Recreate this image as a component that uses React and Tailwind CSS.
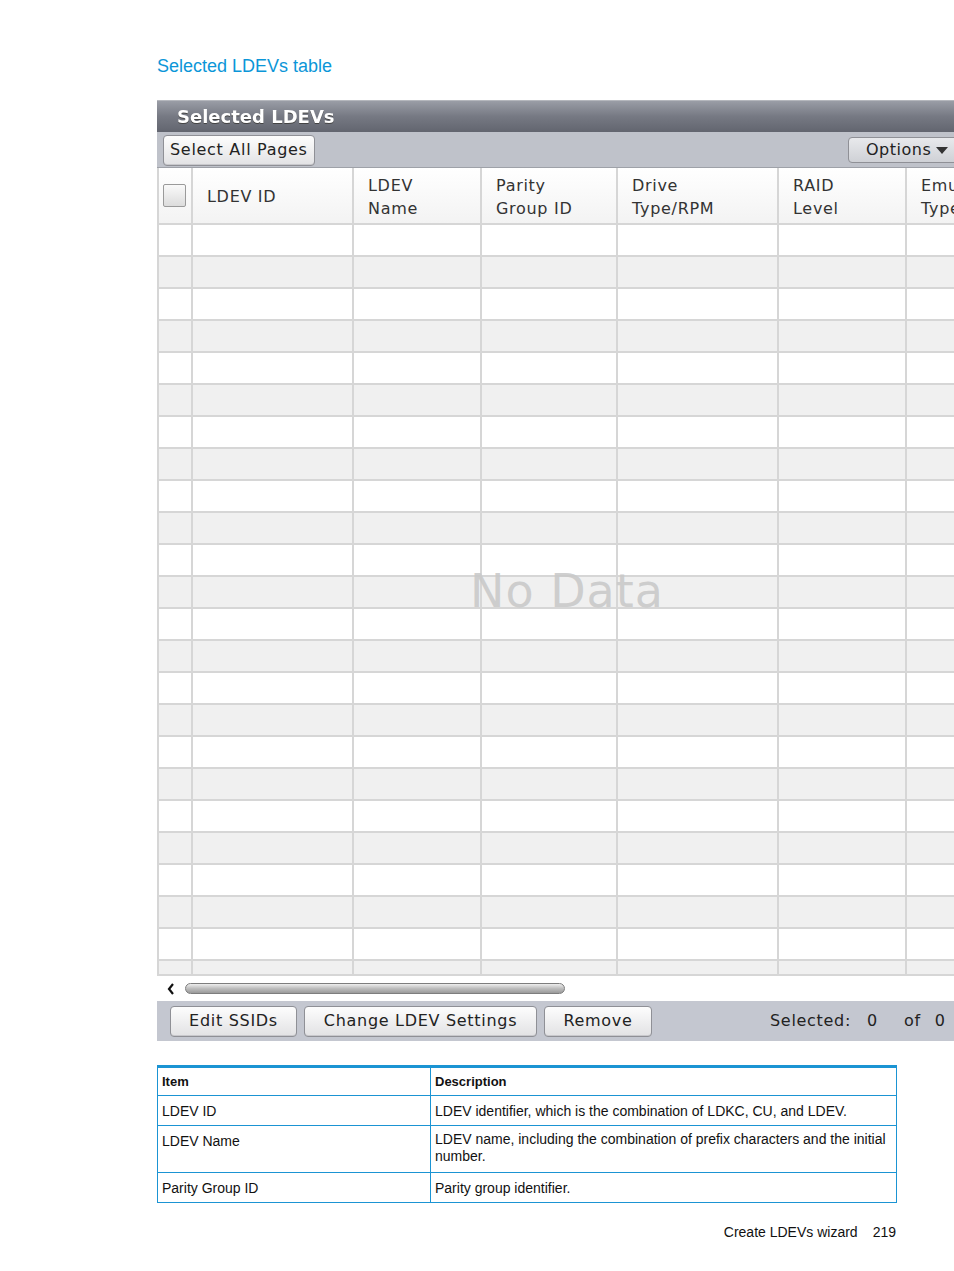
const cols = "grid grid-cols-[34px_161px_128px_136px_161px_128px_160px]";

const headers = ["LDEV ID", "LDEV|Name", "Parity|Group ID", "Drive|Type/RPM", "RAID|Level", "Emulation|Type"];

function Btn({ children, className = "" }) {
  return (
    <button
      className={
        "h-[31px] rounded-[4px] border border-[#8f9096] bg-gradient-to-b from-[#fdfdfd] to-[#e2e2e4] text-[16px] tracking-[0.7px] text-[#222] shadow-[inset_0_-1px_0_#c8c8cc] " +
        className
      }
    >
      {children}
    </button>
  );
}

function GridRow({ i, h = "h-[32px]" }) {
  const bg = i % 2 === 0 ? "bg-white" : "bg-[#f0f0f0]";
  return (
    <div className={`${cols} ${h} ${bg} border-b-2 border-[#d6d6d6]`}>
      {Array.from({ length: 7 }).map((_, c) => (
        <div key={c} className="border-r-2 border-[#d6d6d6]" />
      ))}
    </div>
  );
}

export default function App() {
  const rows = Array.from({ length: 23 });
  return (
    <div className="w-[954px] h-[1271px] bg-white overflow-hidden font-['Liberation_Sans',sans-serif]">
      <div className="pl-[157px] pt-[54px]">
        <h2 className="text-[18px] leading-[25px] text-[#0b96d8] font-light">Selected LDEVs table</h2>
      </div>

      <div className="ml-[157px] mt-[21px] w-[797px] overflow-hidden font-['DejaVu_Sans',sans-serif]">
        <div className="w-[1100px]">
          {/* title bar */}
          <div className="h-[32px] bg-gradient-to-b from-[#9a9da6] via-[#767983] to-[#62656f] flex items-center pl-[20px] border-t border-[#b5b7bd]">
            <span className="text-white font-bold text-[18px] drop-shadow-[0_1px_0_#444]">Selected LDEVs</span>
          </div>
          {/* toolbar */}
          <div className="h-[36px] bg-[#bfc2ca] flex items-center border-b border-[#9ea1a8]">
            <div className="w-[797px] flex items-center justify-between pl-[6px] pt-[1px]">
              <Btn className="h-[26px] px-[6px] text-[16px] tracking-[0.3px] leading-none">Select All Pages</Btn>
              <button className="h-[26px] w-[120px] -mr-[14px] rounded-[4px] border border-[#8f9096] bg-gradient-to-b from-[#e8e9ec] to-[#cfd1d6] text-[16px] tracking-[0.5px] text-[#222] flex items-center pl-[17px] gap-[4px]">
                Options
                <svg width="14" height="10" viewBox="0 0 14 10"><path d="M1 2 L13 2 L7 9 Z" fill="#333" /></svg>
              </button>
            </div>
          </div>

          {/* table */}
          <div className="relative border-l-2 border-[#d6d6d6]">
            <div className={`${cols} h-[57px] bg-gradient-to-b from-white to-[#f3f3f3] border-b-2 border-[#d6d6d6] text-[16px] tracking-[0.7px] text-[#333] leading-[23px]`}>
              <div className="border-r-2 border-[#d6d6d6] flex items-center pl-[4px]">
                <div className="w-[23px] h-[23px] border border-[#9a9a9a] bg-gradient-to-b from-[#fafafa] to-[#dcdcdc] rounded-[2px]" />
              </div>
              {headers.map((h, i) => (
                <div key={i} className="border-r-2 border-[#d6d6d6] flex items-center pl-[14px] pt-[2px]">
                  <div>
                    {h.split("|").map((l, j) => (
                      <div key={j}>{l}</div>
                    ))}
                  </div>
                </div>
              ))}
            </div>
            {rows.map((_, i) => (
              <GridRow key={i} i={i} />
            ))}
            <GridRow i={23} h="h-[15px]" />
            <div className="absolute left-[311px] top-[400px] text-[46px] leading-none tracking-[1px] text-[#c9c9c9]/90">No Data</div>
          </div>

          {/* scroll */}
          <div className="h-[25px] bg-white flex items-center pl-[10px] gap-[10px]">
            <svg width="8" height="12" viewBox="0 0 8 12"><path d="M6 1 L2 6 L6 11" stroke="#111" strokeWidth="2.2" fill="none" /></svg>
            <div className="w-[380px] h-[11px] rounded-full border border-[#7d7d7d] bg-gradient-to-b from-[#eeeeee] via-[#bdbdbd] to-[#9a9a9a]" />
          </div>

          {/* bottom bar */}
          <div className="h-[40px] bg-[#c4c7d0] flex items-center pl-[13px]">
            <Btn className="w-[127px]">Edit SSIDs</Btn>
            <Btn className="w-[233px] ml-[7px]">Change LDEV Settings</Btn>
            <Btn className="w-[108px] ml-[7px]">Remove</Btn>
            <div className="ml-[118px] text-[16px] tracking-[0.7px] text-[#222] flex">
              <span>Selected:</span>
              <span className="ml-[16px]">0</span>
              <span className="ml-[26px]">of</span>
              <span className="ml-[14px]">0</span>
            </div>
          </div>
        </div>
      </div>

      {/* description table */}
      <div className="ml-[157px] mt-[24px] w-[740px] text-[14px] text-[#111] border-x border-b border-[#1b94d3]">
        <div className="grid grid-cols-[273px_1fr] border-t-[3px] border-[#1b94d3]">
          <div className="border-r border-b border-[#1b94d3] px-[4px] h-[28px] flex items-center font-bold text-[13px]">Item</div>
          <div className="border-b border-[#1b94d3] px-[4px] h-[28px] flex items-center font-bold text-[13px]">Description</div>
          <div className="border-r border-b border-[#1b94d3] px-[4px] h-[30px] pt-[5px]">LDEV ID</div>
          <div className="border-b border-[#1b94d3] px-[4px] h-[30px] pt-[5px]">LDEV identifier, which is the combination of LDKC, CU, and LDEV.</div>
          <div className="border-r border-b border-[#1b94d3] px-[4px] h-[47px] pt-[5px]">LDEV Name</div>
          <div className="border-b border-[#1b94d3] px-[4px] h-[47px] pt-[5px] leading-[17px]">LDEV name, including the combination of prefix characters and the initial number.</div>
          <div className="border-r border-[#1b94d3] px-[4px] h-[29px] pt-[5px]">Parity Group ID</div>
          <div className="px-[4px] h-[29px] pt-[5px]">Parity group identifier.</div>
        </div>
      </div>

      <div className="w-[896px] mt-[19px] flex justify-end text-[14px] text-[#111]">
        <span>Create LDEVs wizard</span>
        <span className="ml-[15px]">219</span>
      </div>
    </div>
  );
}
